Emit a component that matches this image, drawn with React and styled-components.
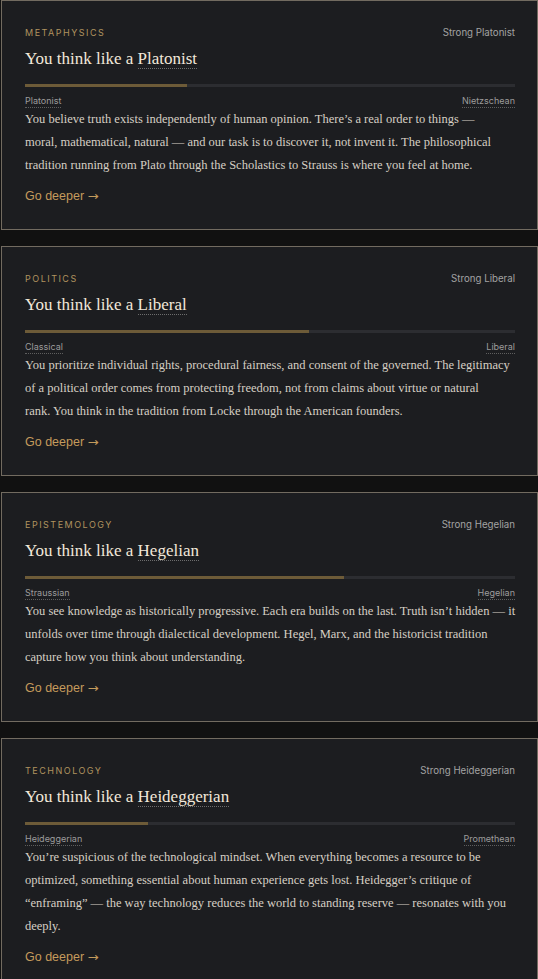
import styled, { createGlobalStyle } from 'styled-components';

const GlobalStyle = createGlobalStyle`
  html, body {
    margin: 0;
    padding: 0;
    background: #111111;
  }
  * {
    box-sizing: border-box;
  }
`;

// body copy keeps the reference's line breaks (rendered with white-space: pre)
const results = [
  {
    category: 'Metaphysics',
    strength: 'Strong Platonist',
    school: 'Platonist',
    left: 'Platonist',
    right: 'Nietzschean',
    fill: 33,
    text: 'You believe truth exists independently of human opinion. There\u2019s a real order to things \u2014\nmoral, mathematical, natural \u2014 and our task is to discover it, not invent it. The philosophical\ntradition running from Plato through the Scholastics to Strauss is where you feel at home.',
  },
  {
    category: 'Politics',
    strength: 'Strong Liberal',
    school: 'Liberal',
    left: 'Classical',
    right: 'Liberal',
    fill: 58,
    text: 'You prioritize individual rights, procedural fairness, and consent of the governed. The legitimacy\nof a political order comes from protecting freedom, not from claims about virtue or natural\nrank. You think in the tradition from Locke through the American founders.',
  },
  {
    category: 'Epistemology',
    strength: 'Strong Hegelian',
    school: 'Hegelian',
    left: 'Straussian',
    right: 'Hegelian',
    fill: 65,
    text: 'You see knowledge as historically progressive. Each era builds on the last. Truth isn\u2019t hidden \u2014 it\nunfolds over time through dialectical development. Hegel, Marx, and the historicist tradition\ncapture how you think about understanding.',
  },
  {
    category: 'Technology',
    strength: 'Strong Heideggerian',
    school: 'Heideggerian',
    left: 'Heideggerian',
    right: 'Promethean',
    fill: 25,
    text: 'You\u2019re suspicious of the technological mindset. When everything becomes a resource to be\noptimized, something essential about human experience gets lost. Heidegger\u2019s critique of\n\u201cenframing\u201d \u2014 the way technology reduces the world to standing reserve \u2014 resonates with you\ndeeply.',
  },
];

const App = () => {
  return (
    <Page>
      <GlobalStyle />
      {results.map((r) => (
        <Card key={r.category}>
          <TopRow>
            <Category>{r.category}</Category>
            <Strength>{r.strength}</Strength>
          </TopRow>
          <Title>
            You think like a <Term>{r.school}</Term>
          </Title>
          <Track>
            <Fill style={{ width: `${r.fill}%` }} />
          </Track>
          <Poles>
            <Pole>{r.left}</Pole>
            <Pole>{r.right}</Pole>
          </Poles>
          <Body>{r.text}</Body>
          <Deeper href='#'>
            Go deeper <Arrow>&rarr;</Arrow>
          </Deeper>
        </Card>
      ))}
    </Page>
  );
};

const Page = styled.div`
  display: flex;
  flex-direction: column;
  gap: 16px;
  padding-left: 1px;
  width: 538px;
`;

const Card = styled.section`
  display: flex;
  flex-direction: column;
  border: 1px solid #726b60;
  background: #1c1d20;
  padding: 23px 22px 24px 23px;
`;

const TopRow = styled.div`
  display: flex;
  justify-content: space-between;
  align-items: center;
  height: 16px;
`;

const Category = styled.span`
  font-family: Inter, 'Liberation Sans', sans-serif;
  font-size: 9px;
  letter-spacing: 1.5px;
  text-transform: uppercase;
  color: #b0935f;
`;

const Strength = styled.span`
  font-family: Inter, 'Liberation Sans', sans-serif;
  font-size: 9.7px;
  color: #a3a3a3;
`;

const Title = styled.h2`
  margin: 7px 0 0;
  font-family: 'Liberation Serif', serif;
  font-weight: 400;
  font-size: 17px;
  line-height: 24px;
  color: #f2e8da;
`;

const Term = styled.span`
  border-bottom: 1px dotted #6d6d6d;
`;

const Track = styled.div`
  margin-top: 13px;
  height: 3px;
  background: #2c2d31;
`;

const Fill = styled.div`
  height: 100%;
  background: #6d5b38;
`;

const Poles = styled.div`
  display: flex;
  justify-content: space-between;
  margin-top: 7px;
`;

const Pole = styled.span`
  font-family: Inter, 'Liberation Sans', sans-serif;
  font-size: 9px;
  line-height: 13px;
  color: #9c9c9c;
  border-bottom: 1px dotted #5e5e5e;
`;

const Body = styled.p`
  margin: 0;
  font-family: 'Liberation Serif', serif;
  font-size: 12.5px;
  line-height: 23px;
  white-space: pre;
  color: #d6cfc4;
`;

const Deeper = styled.a`
  display: flex;
  align-items: center;
  gap: 4px;
  width: fit-content;
  margin-top: 10px;
  font-family: 'Liberation Sans', Arial, sans-serif;
  font-size: 12.5px;
  line-height: 18px;
  color: #c49b5c;
  text-decoration: none;
`;

const Arrow = styled.span`
  font-family: 'DejaVu Sans', sans-serif;
  font-size: 12px;
  transform: scaleX(1.1);
`;

export default App;
